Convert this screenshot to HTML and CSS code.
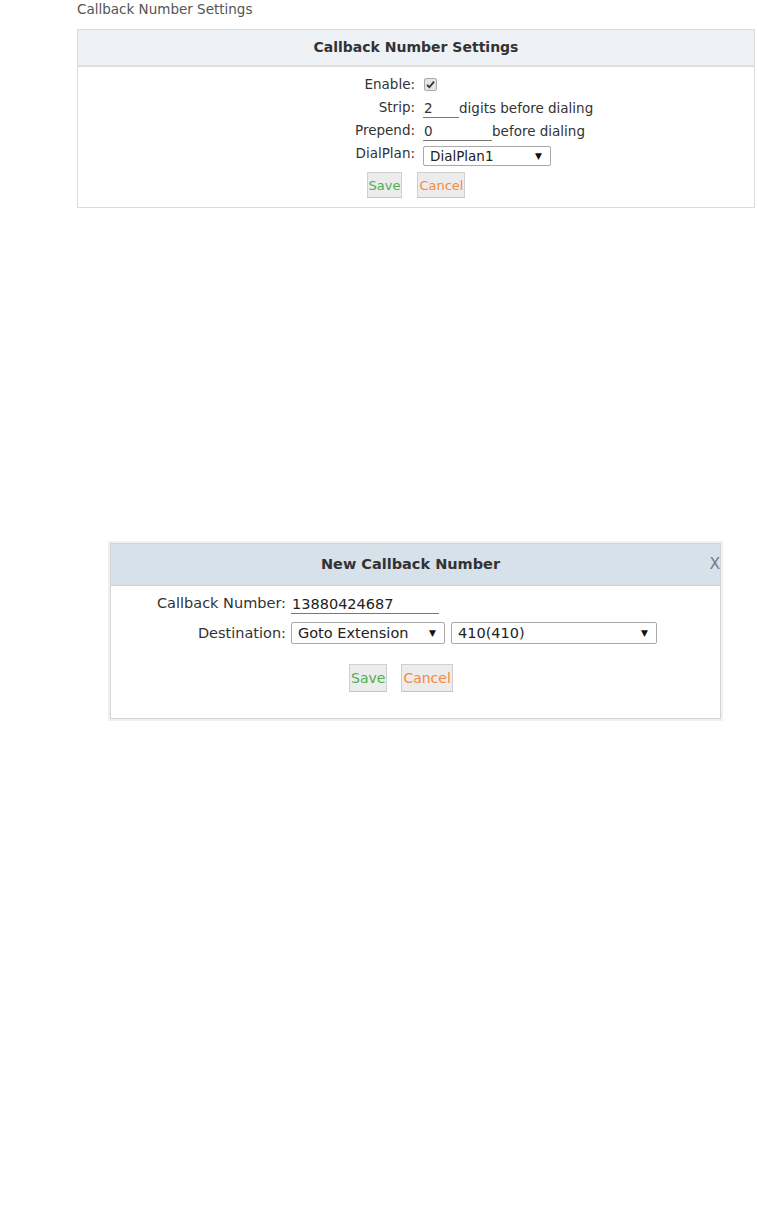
FILE: index.html
```html
<!DOCTYPE html>
<html lang="en">
<head>
    <meta charset="UTF-8">
    <title>Callback Number Settings</title>
    <link rel="stylesheet" href="styles.css">
</head>
<body>
    <div class="page-title">Callback Number Settings</div>

    <div class="panel">
        <div class="panel-head">Callback Number Settings</div>
        <div class="panel-body">
            <div class="form-grid">
                <label>Enable:</label>
                <div class="field">
                    <span class="checkbox">
                        <svg width="9" height="9" viewBox="0 0 9 9"><path d="M1 4.8 L3.4 7.2 L8 1.6" fill="none" stroke="#333" stroke-width="1.8"/></svg>
                    </span>
                </div>

                <label>Strip:</label>
                <div class="field"><span class="line-input w-strip">2</span>digits before dialing</div>

                <label>Prepend:</label>
                <div class="field"><span class="line-input w-prepend">0</span>before dialing</div>

                <label>DialPlan:</label>
                <div class="field"><span class="select w-dialplan">DialPlan1<span class="arrow">▼</span></span></div>
            </div>
            <div class="buttons">
                <button class="btn save">Save</button>
                <button class="btn cancel">Cancel</button>
            </div>
        </div>
    </div>

    <div class="dialog">
        <div class="dialog-inner">
            <div class="dialog-head">
                New Callback Number
                <span class="close">X</span>
            </div>
            <div class="dialog-body">
                <div class="dialog-grid">
                    <label>Callback Number:</label>
                    <div class="field"><span class="line-input w-number">13880424687</span></div>

                    <label>Destination:</label>
                    <div class="field">
                        <span class="select w-dest">Goto Extension<span class="arrow">▼</span></span>
                        <span class="select w-ext">410(410)<span class="arrow">▼</span></span>
                    </div>
                </div>
                <div class="dialog-buttons">
                    <button class="btn save">Save</button>
                    <button class="btn cancel">Cancel</button>
                </div>
            </div>
        </div>
    </div>
</body>
</html>
```

FILE: styles.css
```css
* {
    margin: 0;
    padding: 0;
    box-sizing: border-box;
}

body {
    font-family: "DejaVu Sans", sans-serif;
    font-size: 13.5px;
    color: #333;
    background: #fff;
    width: 757px;
}

.page-title {
    padding: 1px 0 0 77px;
    height: 29px;
    color: #555;
}

/* settings panel */
.panel {
    margin-left: 77px;
    width: 678px;
    border: 1px solid #dcdcdc;
}

.panel-head {
    height: 37px;
    line-height: 35px;
    background: #eef2f7;
    border-bottom: 2px solid #dedede;
    text-align: center;
    font-weight: bold;
    font-size: 14px;
}

.panel-body {
    padding: 6px 0 9px;
}

.form-grid {
    display: grid;
    grid-template-columns: 337px auto;
    column-gap: 8px;
    grid-auto-rows: 23px;
}

.form-grid label {
    text-align: right;
    line-height: 22px;
}

.field {
    display: flex;
    align-items: center;
}

.checkbox {
    width: 13px;
    height: 13px;
    margin-left: 1px;
    border: 1px solid #aaa;
    border-radius: 2px;
    background: #e4e4e4;
    display: flex;
    align-items: center;
    justify-content: center;
}

.line-input {
    display: inline-block;
    height: 18px;
    line-height: 17px;
    padding-left: 1px;
    border-bottom: 1px solid #777;
    margin-top: 2px;
}

.w-strip { width: 36px; }
.w-prepend { width: 69px; }

.select {
    position: relative;
    display: inline-block;
    height: 20px;
    line-height: 18px;
    padding-left: 6px;
    border: 1px solid #a9a9a9;
    border-radius: 2px;
    background: #fff;
    color: #222;
}

.select .arrow {
    position: absolute;
    right: 8px;
    top: 0;
    font-size: 9px;
    color: #111;
}

.w-dialplan {
    width: 128px;
    margin-top: 5px;
}

.buttons {
    display: flex;
    justify-content: center;
    gap: 15px;
    margin-top: 7px;
}

.btn {
    font-family: "DejaVu Sans", sans-serif;
    font-size: 13px;
    height: 26px;
    padding: 0 1px;
    background: #ececec;
    border: 1px solid #cfcfcf;
    border-bottom-color: #c4c4c4;
    cursor: pointer;
}

.btn.save { color: #4cb050; }
.btn.cancel { color: #f58a3c; }

/* new callback dialog */
.dialog {
    margin: 333px 0 0 108px;
    width: 615px;
    border: 2px solid #f0f0f0;
}

.dialog-inner {
    border: 1px solid #d4d4d4;
    font-size: 14.5px;
}

.dialog-head {
    position: relative;
    height: 42px;
    line-height: 41px;
    background: #d6e1ea;
    border-bottom: 1px solid #c9d3dc;
    text-align: center;
    font-weight: bold;
    font-size: 14.5px;
    color: #333;
    padding-right: 10px;
}

.close {
    position: absolute;
    right: 0;
    top: 0;
    font-weight: normal;
    font-size: 15.5px;
    color: #6f7c88;
}

.dialog-body {
    padding: 6px 0 26px;
}

.dialog-grid {
    display: grid;
    grid-template-columns: 175px auto;
    column-gap: 5px;
    row-gap: 8px;
}

.dialog-grid label {
    text-align: right;
    line-height: 22px;
    color: #333;
}

.w-number {
    width: 148px;
    height: 20px;
    line-height: 21px;
    color: #222;
}

.dialog-grid .select {
    height: 22px;
    line-height: 20px;
}

.w-dest { width: 154px; }
.w-ext { width: 206px; margin-left: 6px; }

.dialog-buttons {
    display: flex;
    gap: 14px;
    padding-left: 238px;
    margin-top: 20px;
}

.dialog-buttons .btn {
    height: 28px;
    font-size: 14px;
}
```
